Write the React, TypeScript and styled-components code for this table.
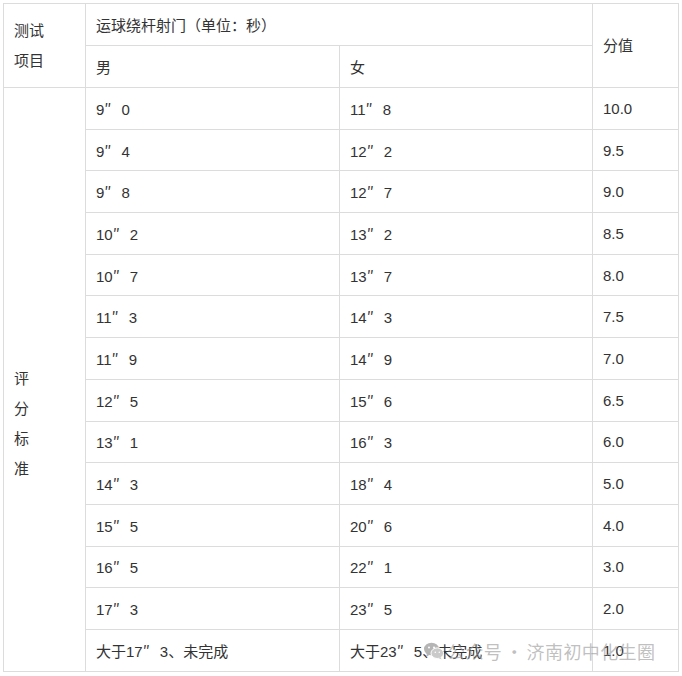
import styled, { createGlobalStyle } from "styled-components";

const GlobalStyle = createGlobalStyle`
  html, body {
    margin: 0;
    padding: 0;
    background: #fff;
  }
  body {
    font-family: "Liberation Sans", "Noto Sans CJK SC", sans-serif;
    color: #333;
  }
`;

interface IRow {
  boy: string;
  girl: string;
  score: string;
}

const rows: IRow[] = [
  { boy: "9″ 0", girl: "11″ 8", score: "10.0" },
  { boy: "9″ 4", girl: "12″ 2", score: "9.5" },
  { boy: "9″ 8", girl: "12″ 7", score: "9.0" },
  { boy: "10″ 2", girl: "13″ 2", score: "8.5" },
  { boy: "10″ 7", girl: "13″ 7", score: "8.0" },
  { boy: "11″ 3", girl: "14″ 3", score: "7.5" },
  { boy: "11″ 9", girl: "14″ 9", score: "7.0" },
  { boy: "12″ 5", girl: "15″ 6", score: "6.5" },
  { boy: "13″ 1", girl: "16″ 3", score: "6.0" },
  { boy: "14″ 3", girl: "18″ 4", score: "5.0" },
  { boy: "15″ 5", girl: "20″ 6", score: "4.0" },
  { boy: "16″ 5", girl: "22″ 1", score: "3.0" },
  { boy: "17″ 3", girl: "23″ 5", score: "2.0" },
  { boy: "大于17″ 3、未完成", girl: "大于23″ 5、未完成", score: "1.0" },
];

// split the ″ out so it gets the full-width CJK glyph
function Time({ value }: { value: string }) {
  const parts = value.split("″");
  if (parts.length < 2) return <>{value}</>;
  return (
    <>
      {parts[0]}
      <Prime>″</Prime>
      {parts[1]}
    </>
  );
}

function App() {
  return (
    <Page>
      <GlobalStyle />
      <Table>
        <colgroup>
          <col width={82} />
          <col width={254} />
          <col width={253} />
          <col width={86} />
        </colgroup>
        <tbody>
          <HeadRow>
            <Cell rowSpan={2}>
              <Lines>
                测试
                <br />
                项目
              </Lines>
            </Cell>
            <Cell colSpan={2}>运球绕杆射门（单位：秒）</Cell>
            <Cell rowSpan={2}>
              <Lines>分值</Lines>
            </Cell>
          </HeadRow>
          <HeadRow>
            <Cell>男</Cell>
            <Cell>女</Cell>
          </HeadRow>
          {rows.map((row, i) => (
            <DataRow key={row.score}>
              {i === 0 && (
                <Cell rowSpan={rows.length}>
                  <Standard>
                    评<br />分<br />标<br />准
                  </Standard>
                </Cell>
              )}
              <Cell>
                <Time value={row.boy} />
              </Cell>
              <Cell>
                <Time value={row.girl} />
              </Cell>
              <Cell>{row.score}</Cell>
            </DataRow>
          ))}
        </tbody>
      </Table>
      <Watermark>
        <WechatIcon />
        <span>公众号</span>
        <Dot>·</Dot>
        <span>济南初中化生圈</span>
      </Watermark>
    </Page>
  );
}

function WechatIcon() {
  return (
    <svg width="20" height="18" viewBox="0 0 20 18">
      <ellipse cx="7.5" cy="7" rx="7.5" ry="6.3" fill="#b5b5b5" />
      <path d="M3 11.5 L2.2 15 L6 12.6 Z" fill="#b5b5b5" />
      <ellipse cx="13.3" cy="11.2" rx="6.3" ry="5.3" fill="#cacaca" stroke="#fff" strokeWidth="1" />
      <path d="M16.5 15 L17.6 17.6 L14.4 16 Z" fill="#cacaca" />
      <circle cx="5" cy="5.5" r="1" fill="#fff" />
      <circle cx="10" cy="5.5" r="1" fill="#fff" />
      <circle cx="11.3" cy="10.2" r="0.8" fill="#fff" />
      <circle cx="15.3" cy="10.2" r="0.8" fill="#fff" />
    </svg>
  );
}

const Page = styled.div`
  position: relative;
  padding: 3px 0 0 3px;
  width: 682px;
  box-sizing: border-box;
`;

const Table = styled.table`
  border-collapse: collapse;
  table-layout: fixed;
  width: 676px;
  font-size: 15px;
  color: #333;
`;

const Cell = styled.td`
  border: 1px solid #dcdcdc;
  padding: 0 10px;
  vertical-align: middle;
  text-align: left;
  white-space: nowrap;
`;

const HeadRow = styled.tr`
  height: 42px;
`;

const DataRow = styled.tr`
  height: 41.7px;
`;

const Lines = styled.div`
  line-height: 30px;
`;

const Standard = styled.div`
  line-height: 30px;
  padding-top: 90px;
`;

const Prime = styled.span`
  display: inline-block;
  width: 13px;
  font-family: "Noto Sans CJK SC", sans-serif;
`;

const Watermark = styled.div`
  position: absolute;
  left: 424px;
  top: 638px;
  display: flex;
  align-items: center;
  gap: 3px;
  font-family: "Noto Sans CJK SC", sans-serif;
  font-size: 18px;
  letter-spacing: 0.4px;
  color: rgba(150, 150, 150, 0.6);
  pointer-events: none;
`;

const Dot = styled.span`
  margin: 0;
`;

export default App;
